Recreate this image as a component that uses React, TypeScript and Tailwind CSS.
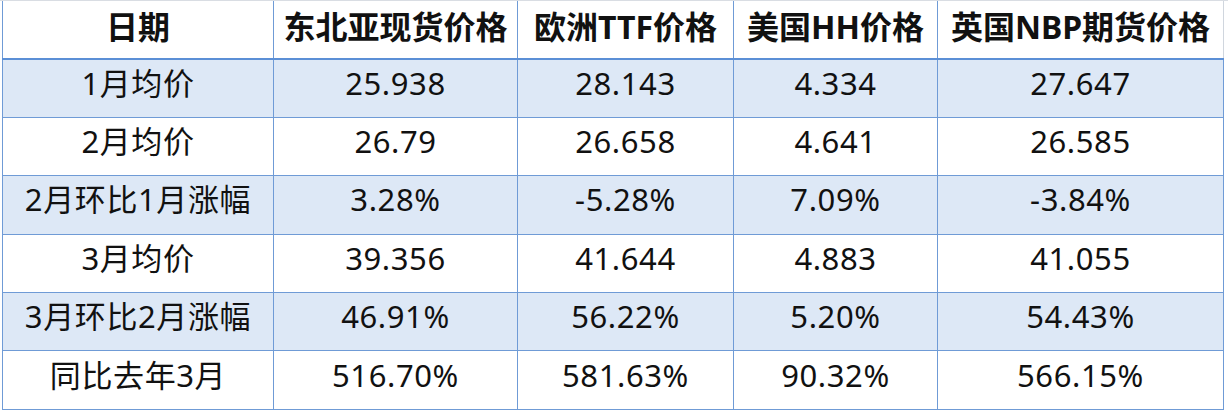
const header = ["日期", "东北亚现货价格", "欧洲TTF价格", "美国HH价格", "英国NBP期货价格"];

const rows = [
  ["1月均价", "25.938", "28.143", "4.334", "27.647"],
  ["2月均价", "26.79", "26.658", "4.641", "26.585"],
  ["2月环比1月涨幅", "3.28%", "-5.28%", "7.09%", "-3.84%"],
  ["3月均价", "39.356", "41.644", "4.883", "41.055"],
  ["3月环比2月涨幅", "46.91%", "56.22%", "5.20%", "54.43%"],
  ["同比去年3月", "516.70%", "581.63%", "90.32%", "566.15%"],
];

const widths = ["w-[271px]", "w-[244px]", "w-[216px]", "w-[204px]", "w-[286px]"];

export default function App() {
  return (
    <div
      className="w-[1228px] h-[412px] bg-white overflow-hidden text-[#111]"
      style={{ fontFamily: '"Noto Sans", "Noto Sans CJK SC", sans-serif' }}
    >
      <div className="pl-[2px] border-t border-[#d9dde3]">
        <table className="table-fixed border-collapse border-r border-[#d0d6de]">
          <thead>
            <tr className="h-[58px]">
              {header.map((h, i) => (
                <th
                  key={h}
                  className={`${widths[i]} border-l border-[#6f9bd6] border-b-2 border-b-[#5b8fd6] font-bold text-[32px] leading-none text-center pb-[6px]`}
                >
                  {h}
                </th>
              ))}
            </tr>
          </thead>
          <tbody>
            {rows.map((r, ri) => (
              <tr key={r[0]} className={`h-[58.4px] ${ri % 2 === 0 ? "bg-[#dde8f6]" : "bg-white"}`}>
                {r.map((c, ci) => (
                  <td
                    key={ci}
                    className={`border-l border-b border-[#6f9bd6] ${ci === 4 ? "border-r" : ""} text-[31px] tracking-[0.6px] leading-none text-center pb-[10px]`}
                  >
                    {c}
                  </td>
                ))}
              </tr>
            ))}
          </tbody>
        </table>
      </div>
    </div>
  );
}
